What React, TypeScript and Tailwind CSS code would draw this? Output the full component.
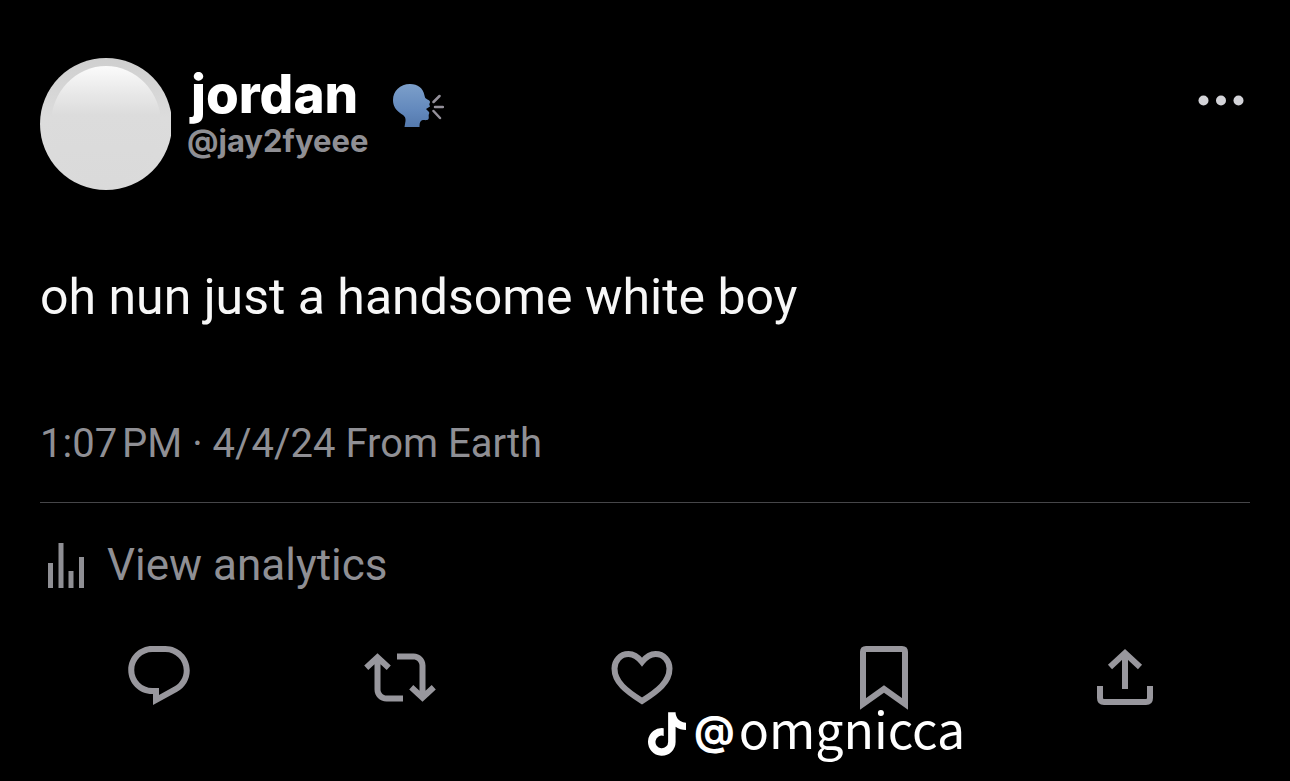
import React from 'react';
import { FaTiktok } from 'react-icons/fa6';

// Icons
const Avatar = () => (
  <svg width="131" height="134" viewBox="0 0 131 134" role="img" aria-label="jordan" className="shrink-0">
    <defs>
      <linearGradient id="rim" x1="0" y1="0" x2="0" y2="1">
        <stop offset="0" stopColor="#cfcfcf" />
        <stop offset="0.25" stopColor="#d6d6d6" />
        <stop offset="0.45" stopColor="#dcdcdc" />
        <stop offset="1" stopColor="#dadada" />
      </linearGradient>
      <linearGradient id="shine" x1="0" y1="0" x2="0" y2="1">
        <stop offset="0" stopColor="#fbfbfb" />
        <stop offset="0.2" stopColor="#ebebeb" />
        <stop offset="0.42" stopColor="#dcdcdc" />
        <stop offset="1" stopColor="#dadada" />
      </linearGradient>
    </defs>
    <circle cx="66" cy="67" r="66" fill="url(#rim)" />
    <ellipse cx="66" cy="67" rx="55" ry="58" fill="url(#shine)" />
  </svg>
);

const SpeakingHead = () => (
  <svg width="52" height="46" viewBox="0 0 52 46" role="img" aria-label="speaking head" className="shrink-0">
    <defs>
      <linearGradient id="head" x1="0" y1="0" x2="0" y2="1">
        <stop offset="0" stopColor="#7c9fca" />
        <stop offset="0.6" stopColor="#6389bd" />
        <stop offset="1" stopColor="#5479ad" />
      </linearGradient>
    </defs>
    <path
      d="M18 1C8 1 1 8 1 17c0 6 3 10 7 13 4 2.5 6 4 5.5 8l-1 6h15c0-3 0-5 2-6.5 2.5-1 6 .5 7-1.5.8-1.5-.2-3 .3-4.5.4-1 .7-1.5.2-2.5l-3-3 4-2.5c-.5-1.5-1-2-.5-3 1-1.5.5-2.5-1-3.5-3-1.5-3.5-2-4-4.5C31 5 26 1 18 1z"
      fill="url(#head)"
    />
    <path d="M41.5 19l6-6M43 24h8M41.5 28l6.500 7" stroke="#94909a" strokeWidth="2.5" strokeLinecap="round" fill="none" />
  </svg>
);

const DotsIcon = () => (
  <svg width="46" height="12" viewBox="0 0 46 12" fill="#d3d3d8">
    <circle cx="5.5" cy="6.5" r="5"></circle>
    <circle cx="23" cy="6.5" r="5"></circle>
    <circle cx="40.5" cy="6.5" r="5"></circle>
  </svg>
);

const AnalyticsIcon = () => (
  <svg width="37" height="45" viewBox="0 0 37 45" fill="currentColor" className="shrink-0">
    <rect x="0" y="20" width="5" height="25"></rect>
    <rect x="10.5" y="0" width="5" height="45"></rect>
    <rect x="20.5" y="28" width="5" height="17"></rect>
    <rect x="31" y="14" width="5" height="31"></rect>
  </svg>
);

const ReplyIcon = () => (
  <svg width="72" height="72" viewBox="0 0 24 24" fill="currentColor">
    <path d="M1.751 10c0-4.42 3.584-8 8.005-8h4.366c4.49 0 8.129 3.64 8.129 8.13 0 2.96-1.607 5.68-4.196 7.11l-8.054 4.46v-3.69h-.067c-4.49.1-8.183-3.51-8.183-8.01zm8.005-6c-3.317 0-6.005 2.69-6.005 6 0 3.37 2.77 6.08 6.138 6.01l.351-.01h1.761v2.3l5.087-2.81c1.951-1.08 3.163-3.13 3.163-5.36 0-3.39-2.744-6.13-6.129-6.13H9.756z" />
  </svg>
);

const RepostIcon = () => (
  <svg width="72" height="72" viewBox="0 -0.5 24 24" fill="currentColor">
    <path d="M4.5 3.88l4.432 4.14-1.364 1.46L5.5 7.55V16c0 1.1.896 2 2 2H13v2H7.5c-2.209 0-4-1.79-4-4V7.55L1.432 9.48.068 8.02 4.5 3.88zM16.5 6H11V4h5.5c2.209 0 4 1.79 4 4v8.45l2.068-1.93 1.364 1.46-4.432 4.14-4.432-4.14 1.364-1.46 2.068 1.93V8c0-1.1-.896-2-2-2z" />
  </svg>
);

const HeartIcon = () => (
  <svg width="72" height="72" viewBox="0 0 72 72" fill="none" stroke="currentColor" strokeWidth="6">
    <path d="M36 22C32 17 28 14 22.5 14 14 14 8.5 21 8.5 28.5 8.5 42 20 51 36 61 52 51 63.5 42 63.5 28.5 63.5 21 58 14 49.5 14 44 14 40 17 36 22z" />
  </svg>
);

const BookmarkIcon = () => (
  <svg width="72" height="72" viewBox="0 0 72 72" fill="none" stroke="currentColor" strokeWidth="6">
    <path d="M15 64V12q0-3 3-3H54q3 0 3 3V64L36 49z" />
  </svg>
);

const ShareIcon = () => (
  <svg width="72" height="72" viewBox="0 0 72 72" fill="none" stroke="currentColor" strokeWidth="6">
    <path d="M11 46V58q0 4 4 4H57q4 0 4-4V46" />
    <path d="M36 14V49M21 27L36 13 51 27" />
  </svg>
);

const actions = [
  { label: 'Reply', icon: <ReplyIcon /> },
  { label: 'Repost', icon: <RepostIcon /> },
  { label: 'Like', icon: <HeartIcon /> },
  { label: 'Bookmark', icon: <BookmarkIcon /> },
  { label: 'Share', icon: <ShareIcon /> },
];

export default function App() {
  return (
    <main className="relative min-h-screen bg-black pt-[57px] font-['Roboto',sans-serif] text-[#8f8f94]">
      <article>
        {/* Author */}
        <header className="flex items-start px-10">
          <Avatar />
          <div className="ml-4 pt-[9px] font-['Inter',sans-serif] font-bold">
            <h1 className="pl-1 text-[53px] leading-[56px] font-extrabold text-white">jordan</h1>
            <a href="#profile" className="block text-[31px] leading-[38px]">@jay2fyeee</a>
          </div>
          <div className="ml-6 pt-[26px]">
            <SpeakingHead />
          </div>
          <button type="button" aria-label="More" className="mt-[37px] ml-auto mr-1.5">
            <DotsIcon />
          </button>
        </header>

        <p className="mt-[76px] px-10 text-[50px] leading-[60px] text-[#f7f7f7]">oh nun just a handsome white boy</p>

        <p className="mt-[93px] px-10 text-[40px] leading-[48px]">1:07{'\u202f'}PM · 4/4/24 From Earth</p>

        <hr className="mx-10 mt-[34px] border-[#464649]" />

        <a href="#analytics" className="mt-9 flex items-center gap-[22px] px-12 text-[44px] leading-[52px]">
          <AnalyticsIcon />
          View analytics
        </a>

        {/* Actions */}
        <div className="mt-[49px] grid grid-cols-5 pl-[38px] pr-11 text-[#98979d]">
          {actions.map((action) => (
            <button key={action.label} type="button" aria-label={action.label} className="flex justify-center">
              {action.icon}
            </button>
          ))}
        </div>
      </article>

      {/* Watermark */}
      <div className="absolute bottom-0.5 left-1/2 flex items-center gap-2 pl-[3px] text-white">
        <FaTiktok className="h-11 w-[38px]" />
        <span className="flex items-center gap-1 pb-[18px]">
          <span className="pt-3 font-['Inter',sans-serif] text-[40px] leading-[60px] font-bold">@</span>
          <span className="pt-1 font-['Noto_Sans_CJK_SC',sans-serif] text-[50px] leading-[60px]">omgnicca</span>
        </span>
      </div>
    </main>
  );
}
